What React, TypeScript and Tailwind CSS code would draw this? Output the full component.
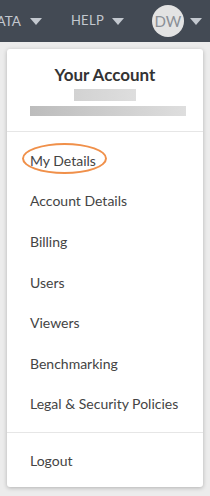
import React from "react";

const Caret = () => (
  <svg width="12" height="7" viewBox="0 0 12 7" className="block">
    <path d="M0 0 L12 0 L6 7 Z" fill="#c3c8cf" />
  </svg>
);

const items = [
  "My Details",
  "Account Details",
  "Billing",
  "Users",
  "Viewers",
  "Benchmarking",
  "Legal & Security Policies",
];

export default function App() {
  return (
    <div
      className="w-[210px] h-[496px] bg-[#ececec] overflow-hidden"
      style={{ fontFamily: "Lato, 'Open Sans', sans-serif" }}
    >
      <div className="h-[42px] bg-[#434a54] flex items-center justify-end pr-[8px] overflow-hidden">
        <div className="flex items-center shrink-0 gap-[9px] text-[13.5px] text-[#c3c8cf]">
          <span>DATA</span>
          <Caret />
        </div>
        <div className="flex items-center shrink-0 gap-[8px] ml-[29px] text-[13px] text-[#c3c8cf]">
          <span className="tracking-[0.3px]">HELP</span>
          <Caret />
        </div>
        <div className="flex items-center shrink-0 ml-[28px] gap-[6px]">
          <div className="w-[32px] h-[32px] rounded-full bg-[#e3e3e3] flex items-center justify-center text-[15px] text-[#8a8f96]">
            DW
          </div>
          <Caret />
        </div>
      </div>
      <div className="mx-[7px] mt-[7px] h-[438px] bg-white rounded-[3px] shadow-[0_1px_4px_rgba(0,0,0,0.25)] flex flex-col">
        <div className="pt-[16px] text-center text-[17px] leading-[20px] font-bold text-[#333]">
          Your Account
        </div>
        <div className="mt-[4px] mx-auto w-[62px] h-[12px] bg-gradient-to-r from-[#d2d2d2] to-[#dedede]" />
        <div className="mt-[5px] ml-[23px] w-[156px] h-[10px] bg-gradient-to-r from-[#bcbcbc] to-[#dedede]" />
        <div className="mt-[15px] h-px bg-[#e6e6e6]" />
        <div className="pt-[8px] pb-[8px] flex flex-col">
          {items.map((it, i) => (
            <div
              key={it}
              className="relative h-[40.6px] flex items-center pl-[23px] text-[14px] text-[#444]"
            >
              {i === 0 && (
                <div className="absolute left-[15px] top-[3px] w-[85px] h-[31px] rounded-[50%] border-2 border-[#f0904a]" />
              )}
              <span className="relative">{it}</span>
            </div>
          ))}
        </div>
        <div className="h-px bg-[#e6e6e6]" />
        <div className="mt-[7px] h-[40px] flex items-center pl-[23px] text-[14px] text-[#444]">
          Logout
        </div>
      </div>
    </div>
  );
}
